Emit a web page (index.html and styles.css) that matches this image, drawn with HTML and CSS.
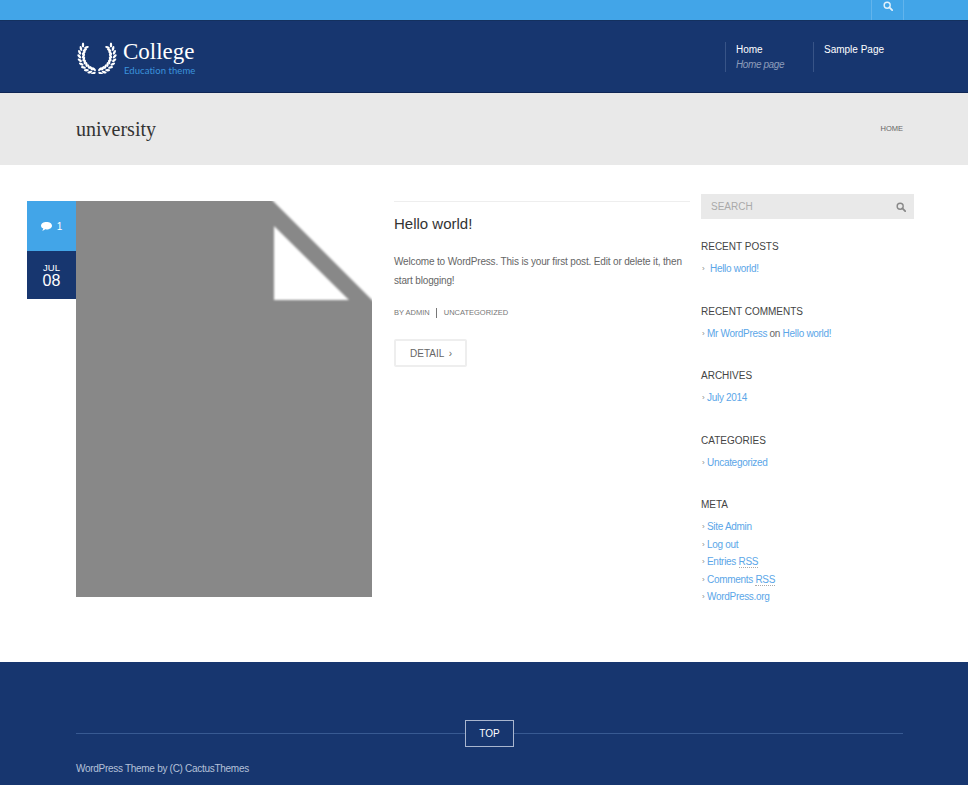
FILE: index.html
```html
<!DOCTYPE html>
<html>
<head>
	<meta charset="UTF-8">
	<title>university | College</title>
	<link rel="stylesheet" href="styles.css">
</head>
<body>
	<svg class="defs" width="0" height="0">
		<symbol id="ico-search" viewBox="0 0 12 12">
			<circle cx="5" cy="5" r="3.6" fill="none" stroke="currentColor" stroke-width="1.7"/>
			<path d="M7.7 7.7 L11 11" stroke="currentColor" stroke-width="2.1" stroke-linecap="round"/>
		</symbol>
		<g id="leaves">
			<ellipse cx="1.8" cy="12.8" rx="1.2" ry="2.5" transform="rotate(-35 1.8 12.8)"/>
			<ellipse cx="6" cy="12.8" rx="1.2" ry="2.5" transform="rotate(35 6 12.8)"/>
		</g>
		<g id="branch">
			<use href="#leaves" transform="rotate(34 19.5 14)"/>
			<use href="#leaves" transform="rotate(21 19.5 14)"/>
			<use href="#leaves" transform="rotate(8 19.5 14)"/>
			<use href="#leaves" transform="rotate(-5 19.5 14)"/>
			<use href="#leaves" transform="rotate(-18 19.5 14)"/>
			<use href="#leaves" transform="rotate(-31 19.5 14)"/>
			<use href="#leaves" transform="rotate(-44 19.5 14)"/>
			<use href="#leaves" transform="rotate(-57 19.5 14)"/>
			<use href="#leaves" transform="rotate(-70 19.5 14)"/>
			<use href="#leaves" transform="rotate(-82 19.5 14)"/>
		</g>
	</svg>

	<div class="topbar">
		<div class="top-search">
			<svg class="ico-top" width="10" height="10"><use href="#ico-search"/></svg>
		</div>
	</div>

	<header class="header">
		<div class="logo">
			<svg class="wreath" width="40" height="32" viewBox="0 0 39 32" fill="#fff">
				<use href="#branch"/>
				<use href="#branch" transform="translate(39 0) scale(-1 1)"/>
			</svg>
			<div class="logo-text">
				<div class="logo-name">College</div>
				<div class="logo-sub">Education theme</div>
			</div>
		</div>
		<nav class="nav">
			<a class="nav-item nav-home">Home<em>Home page</em></a>
			<a class="nav-item">Sample Page</a>
		</nav>
	</header>

	<div class="pagetitle">
		<h1>university</h1>
		<span class="crumb">HOME</span>
	</div>

	<div class="main">
		<article class="post">
			<div class="post-side">
				<div class="comment-box">
					<svg width="11" height="9" viewBox="0 0 11 9" fill="#fff"><path d="M5.5 0 C8.6 0 11 1.6 11 3.7 C11 5.8 8.6 7.4 5.5 7.4 C5 7.4 4.6 7.4 4.2 7.3 C3.3 8 2.3 8.5 1.2 8.7 C1.8 8 2.2 7.2 2.3 6.6 C0.9 5.9 0 4.9 0 3.7 C0 1.6 2.4 0 5.5 0 Z"/></svg>
					<span>1</span>
				</div>
				<div class="date-box">
					<span class="month">JUL</span>
					<span class="day">08</span>
				</div>
			</div>
			<svg class="thumb" width="296" height="396" viewBox="0 0 296 396">
				<rect width="296" height="396" fill="#888"/>
				<path class="fold" d="M191 -6 H302 V105 Z" fill="#fff"/>
				<path class="fold" d="M198 25 V99 H273 Z" fill="#fff"/>
			</svg>
			<div class="post-body">
				<h2>Hello world!</h2>
				<p>Welcome to WordPress. This is your first post. Edit or delete it, then start blogging!</p>
				<div class="post-meta"><span>BY ADMIN</span><span class="sep">UNCATEGORIZED</span></div>
				<a class="btn-detail">DETAIL <i>&rsaquo;</i></a>
			</div>
		</article>

		<aside class="sidebar">
			<div class="searchbox">
				<span>SEARCH</span>
				<svg class="ico-side" width="10" height="10"><use href="#ico-search"/></svg>
			</div>
			<section class="widget">
				<h3>RECENT POSTS</h3>
				<ul class="indent"><li><a>Hello world!</a></li></ul>
			</section>
			<section class="widget">
				<h3>RECENT COMMENTS</h3>
				<ul><li><a>Mr WordPress</a> on <a>Hello world!</a></li></ul>
			</section>
			<section class="widget">
				<h3>ARCHIVES</h3>
				<ul><li><a>July 2014</a></li></ul>
			</section>
			<section class="widget">
				<h3>CATEGORIES</h3>
				<ul><li><a>Uncategorized</a></li></ul>
			</section>
			<section class="widget">
				<h3>META</h3>
				<ul>
					<li><a>Site Admin</a></li>
					<li><a>Log out</a></li>
					<li><a>Entries <abbr>RSS</abbr></a></li>
					<li><a>Comments <abbr>RSS</abbr></a></li>
					<li><a>WordPress.org</a></li>
				</ul>
			</section>
		</aside>
	</div>

	<footer class="footer">
		<div class="top-row">
			<span class="rule"></span>
			<a class="btn-top">TOP</a>
			<span class="rule"></span>
		</div>
		<div class="copy">WordPress Theme by (C) CactusThemes</div>
	</footer>
</body>
</html>
```
FILE: styles.css
```css
*{margin:0;padding:0;box-sizing:border-box;}
html,body{height:785px;overflow:hidden;}
body{
	background:#fff;
	font-family:"Liberation Sans",Arial,sans-serif;
	font-size:10px;
	color:#666;
}
.defs{position:absolute;}
ul{list-style:none;}

/* top bar */
.topbar{
	height:20px;
	background:#42a5e8;
	display:flex;
	justify-content:flex-end;
	padding-right:64px;
}
.top-search{
	width:33px;
	height:20px;
	border-left:1px solid #62b4ec;
	border-right:1px solid #62b4ec;
	display:flex;
	justify-content:center;
	padding-top:1px;
}
.ico-top{color:#e4f2fc;}

/* header */
.header{
	height:73px;
	background:#17366f;
	border-top:1px solid #14315f;
	border-bottom:1px solid #0f2655;
	padding:21px 65px 0 76px;
	display:flex;
	justify-content:space-between;
	align-items:flex-start;
}
.logo{display:flex;}
.wreath{display:block;margin-left:1px;}
.logo-text{margin-left:6px;margin-top:-3px;}
.logo-name{
	font-family:"Liberation Serif",serif;
	font-size:23px;
	line-height:26px;
	color:#fff;
}
.logo-sub{
	font-family:"Lato",sans-serif;
	font-size:9.5px;
	line-height:11px;
	letter-spacing:0.06px;
	color:#3b93dc;
	margin-left:1px;
}
.nav{display:flex;}
.nav-item{
	display:block;
	height:30px;
	border-left:1px solid #385487;
	padding:1px 0 0 10px;
	color:#fff;
	line-height:13px;
	width:88px;
}
.nav-item:last-child{width:90px;}
.nav-item em{
	display:block;
	margin-top:2px;
	letter-spacing:-0.4px;
	color:#8d9cba;
}

/* page title */
.pagetitle{
	height:72px;
	background:#e9e9e9;
	padding:0 65px 0 76px;
	display:flex;
	justify-content:space-between;
	align-items:center;
}
.pagetitle h1{
	font-family:"Liberation Serif",serif;
	font-size:20px;
	font-weight:normal;
	color:#333;
	margin-top:1px;
}
.crumb{
	font-size:7.5px;
	color:#666;
	margin-bottom:2px;
}

/* content */
.main{
	height:497px;
	display:flex;
	padding:29px 0 0 27px;
}
.post{
	display:flex;
	align-items:flex-start;
	margin-top:7px;
}
.post-side{width:49px;}
.comment-box{
	height:50px;
	background:#42a5e8;
	color:#fff;
	display:flex;
	align-items:center;
	justify-content:center;
	gap:5px;
}
.date-box{
	height:48px;
	background:#17366f;
	color:#fff;
	display:flex;
	flex-direction:column;
	align-items:center;
	padding-top:12px;
}
.month{font-size:9.5px;line-height:10px;}
.day{font-size:16px;line-height:16px;}
.thumb{display:block;}
.fold{filter:blur(0.9px);}
.post-body{
	width:296px;
	margin-left:22px;
	border-top:1px solid #eee;
}
.post-body h2{
	font-size:15px;
	font-weight:normal;
	line-height:20px;
	color:#333;
	margin-top:12px;
}
.post-body p{
	letter-spacing:-0.16px;
	line-height:19px;
	margin-top:18px;
}
.post-meta{
	font-size:7.5px;
	line-height:10px;
	margin-top:18px;
	display:flex;
	color:#777;
}
.sep{
	border-left:1px solid #777;
	margin-left:6px;
	padding-left:7px;
}
.btn-detail{
	display:inline-block;
	width:73px;
	height:28px;
	border:2px solid #eee;
	border-radius:2px;
	margin-top:21px;
	padding-left:14px;
	line-height:26px;
	color:#666;
}
.btn-detail i{font-style:normal;margin-left:2px;}

/* sidebar */
.sidebar{
	width:213px;
	margin-left:11px;
}
.searchbox{
	height:25px;
	background:#e9e9e9;
	color:#aaa;
	display:flex;
	justify-content:space-between;
	align-items:center;
	padding:0 8px 0 10px;
	margin-bottom:21px;
}
.ico-side{color:#888;}
.widget{margin-bottom:26.75px;}
.widget h3{
	font-size:10px;
	font-weight:normal;
	line-height:14px;
	color:#444;
	margin-bottom:6.25px;
}
.widget li{
	letter-spacing:-0.3px;
	line-height:17.5px;
	position:relative;
	padding-left:6px;
}
.widget li::before{
	content:"\203A";
	position:absolute;
	left:1px;
	color:#888;
	font-size:8px;
}
.widget .indent li{padding-left:9px;}
.widget a{color:#5ba6e8;}
abbr{border-bottom:1px dotted #aaa;}

/* footer */
.footer{
	height:123px;
	background:#17366f;
	padding:58px 65px 0 76px;
}
.top-row{
	display:flex;
	align-items:center;
}
.rule{
	flex:1;
	height:1px;
	background:#385a92;
}
.btn-top{
	width:49px;
	height:27px;
	border:1px solid #a9b6cf;
	color:#fff;
	text-align:center;
	line-height:25px;
}
.copy{
	letter-spacing:-0.29px;
	color:#b5c1d9;
	margin-top:15px;
	line-height:13px;
}
```
